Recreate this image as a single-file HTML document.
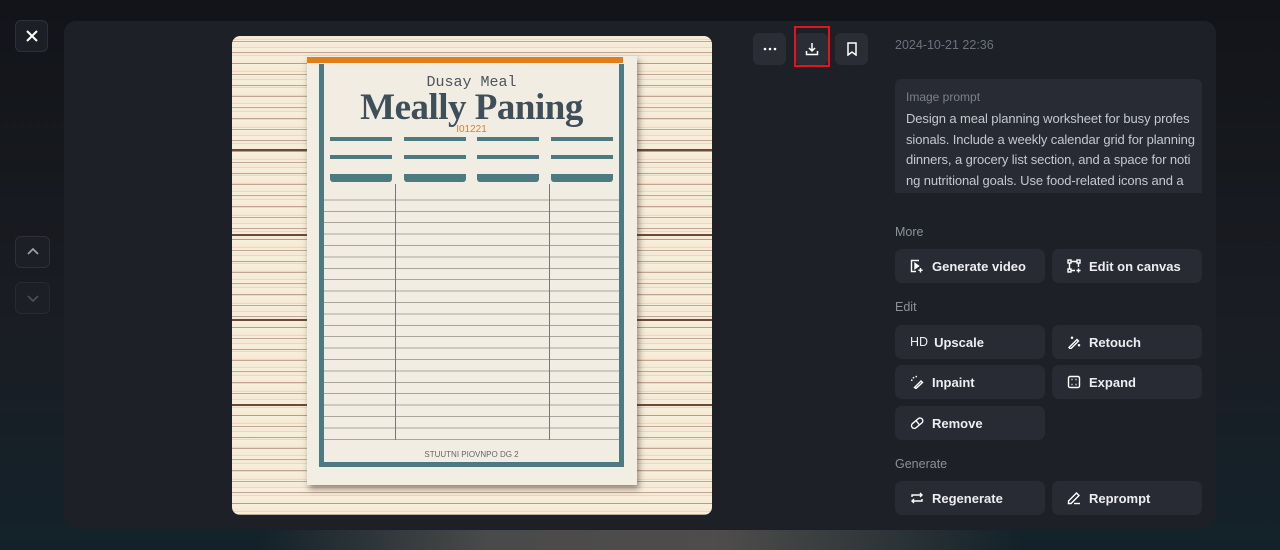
<!DOCTYPE html>
<html><head><meta charset="utf-8"><style>
*{box-sizing:border-box;margin:0;padding:0}
body{width:1280px;height:550px;overflow:hidden;background:linear-gradient(180deg,#121419 0%,#1a1d23 60%,#13222a 100%);font-family:"Liberation Sans",sans-serif;position:relative}
.abs{position:absolute}
.bottomglow{left:260px;top:530px;width:760px;height:20px;background:linear-gradient(90deg,rgba(80,80,80,0),#4a4a4a 30%,#4f4d4b 60%,rgba(60,60,60,0))}
.panel{left:64px;top:21px;width:1152px;height:508px;background:#1d2027;border-radius:12px}
.sq{border:1px solid #2c3038;background:#1c1f25;border-radius:6px;display:flex;align-items:center;justify-content:center}
.img{left:232px;top:36px;width:480px;height:479px;border-radius:8px;overflow:hidden;
background:
repeating-linear-gradient(180deg,rgba(0,0,0,0) 0 5px,rgba(130,80,60,.45) 5px 6px,rgba(0,0,0,0) 6px 11px),
repeating-linear-gradient(180deg,#f4ead6 0 3px,#ead9bd 3px 4px,#f6eddb 4px 8px);}
.plank{position:absolute;left:0;width:480px;height:2px;background:#6b4a38}
.paper{left:307px;top:56px;width:330px;height:429px;background:#f2eee3;box-shadow:2px 4px 6px rgba(60,40,30,.5)}
.orange{left:307px;top:57px;width:316px;height:6px;background:#e07e1c}
.frame{left:319px;top:64px;width:305px;height:403px;border:5px solid #4d7a80;border-top:none;background:#f1ede2}
.btn{position:absolute;width:150px;height:34px;background:#282b34;border-radius:7px;color:#eceef2;font-weight:bold;font-size:13px;display:flex;align-items:center;padding-left:15px}
.btn svg{margin-right:8px}
.lbl{position:absolute;left:895px;color:#8b909a;font-size:12.5px}
.pl{white-space:nowrap}
</style></head><body>
<div class="abs bottomglow"></div>
<div class="abs panel"></div>
<div class="abs sq" style="left:15px;top:20px;width:33px;height:32px"><svg width="14" height="14" viewBox="0 0 14 14"><path d="M2 2L12 12M12 2L2 12" stroke="#fff" stroke-width="2"/></svg></div>
<div class="abs sq" style="left:15px;top:236px;width:35px;height:32px"><svg width="14" height="10" viewBox="0 0 14 10"><path d="M2 7L7 2L12 7" stroke="#9a9ea6" stroke-width="1.8" fill="none"/></svg></div>
<div class="abs sq" style="left:15px;top:282px;width:35px;height:32px;border-color:#262a31"><svg width="14" height="10" viewBox="0 0 14 10"><path d="M2 3L7 8L12 3" stroke="#4a4e56" stroke-width="1.8" fill="none"/></svg></div>

<div class="abs img">
<div class="plank" style="top:113px"></div><div class="plank" style="top:198px"></div><div class="plank" style="top:283px"></div><div class="plank" style="top:368px"></div>
</div>
<div class="abs paper"></div>
<div class="abs orange"></div>
<div class="abs frame">
 <div class="abs" style="left:0;width:295px;top:10px;text-align:center;color:#4a5560;font-family:'Liberation Mono',monospace;font-size:15px">Dusay Meal</div>
 <div class="abs" style="left:0;width:295px;top:22px;text-align:center;color:#3f4f5a;font-family:'Liberation Serif',serif;font-weight:bold;font-size:37px;letter-spacing:-0.5px">Meally Paning</div>
 <div class="abs" style="left:0;width:295px;top:60px;text-align:center;color:#d9822a;font-size:10px">I01221</div>
 <div class="abs" style="left:6px;top:73px;width:62px;height:4px;background:#4d7a80"></div>
 <div class="abs" style="left:80px;top:73px;width:62px;height:4px;background:#4d7a80"></div>
 <div class="abs" style="left:153px;top:73px;width:62px;height:4px;background:#4d7a80"></div>
 <div class="abs" style="left:227px;top:73px;width:62px;height:4px;background:#4d7a80"></div>
 <div class="abs" style="left:6px;top:91px;width:62px;height:4px;background:#4d7a80"></div>
 <div class="abs" style="left:80px;top:91px;width:62px;height:4px;background:#4d7a80"></div>
 <div class="abs" style="left:153px;top:91px;width:62px;height:4px;background:#4d7a80"></div>
 <div class="abs" style="left:227px;top:91px;width:62px;height:4px;background:#4d7a80"></div>
 <div class="abs" style="left:6px;top:110px;width:62px;height:8px;background:#4d7a80;border-radius:0 0 3px 3px"></div>
 <div class="abs" style="left:80px;top:110px;width:62px;height:8px;background:#4d7a80;border-radius:0 0 3px 3px"></div>
 <div class="abs" style="left:153px;top:110px;width:62px;height:8px;background:#4d7a80;border-radius:0 0 3px 3px"></div>
 <div class="abs" style="left:227px;top:110px;width:62px;height:8px;background:#4d7a80;border-radius:0 0 3px 3px"></div>
 <div class="abs" style="left:0;top:125px;width:295px;height:251px;background:repeating-linear-gradient(180deg,transparent 0 10.4px,#a8a59c 10.4px 11.4px)"></div>
 <div class="abs" style="left:71px;top:120px;width:1px;height:256px;background:#777"></div>
 <div class="abs" style="left:225px;top:120px;width:1px;height:256px;background:#777"></div>
 <div class="abs" style="left:0;width:295px;top:386px;text-align:center;color:#666;font-size:8px">STUUTNI PIOVNPO DG 2</div>
</div>

<div class="abs sq" style="left:753px;top:33px;width:33px;height:32px;background:#2a2d35;border:none"><svg width="14" height="4"><circle cx="2" cy="2" r="1.3" fill="#fff"/><circle cx="7" cy="2" r="1.3" fill="#fff"/><circle cx="12" cy="2" r="1.3" fill="#fff"/></svg></div>
<div class="abs sq" style="left:795px;top:33px;width:33px;height:32px;background:#2a2d35;border:none"><svg width="14" height="14" viewBox="0 0 14 14" fill="none" stroke="#fff" stroke-width="1.5"><path d="M7 1V9M4 6L7 9L10 6M1.5 9V12.5H12.5V9"/></svg></div>
<div class="abs" style="left:794px;top:26px;width:36px;height:41px;border:2px solid #e5131b"></div>
<div class="abs sq" style="left:835px;top:33px;width:33px;height:32px;background:#2a2d35;border:none"><svg width="12" height="14" viewBox="0 0 12 14" fill="none" stroke="#fff" stroke-width="1.5"><path d="M2 1H10V13L6 10L2 13Z"/></svg></div>

<div class="abs" style="left:895px;top:38px;color:#6d727c;font-size:12.5px">2024-10-21 22:36</div>
<div class="abs" style="left:895px;top:79px;width:307px;height:114px;background:#282b34;border-radius:6px 6px 0 0;overflow:hidden;padding:11px 11px">
 <div style="color:#7b808a;font-size:12px;margin-bottom:5px">Image prompt</div>
 <div style="color:#c4c8cf;font-size:13px;line-height:20.5px;letter-spacing:-0.1px">
 <div class="pl">Design a meal planning worksheet for busy profes</div>
 <div class="pl">sionals. Include a weekly calendar grid for planning</div>
 <div class="pl">dinners, a grocery list section, and a space for noti</div>
 <div class="pl">ng nutritional goals. Use food-related icons and a</div>
 </div>
</div>

<div class="lbl" style="top:225px">More</div>
<div class="btn" style="left:895px;top:249px"><svg width="14" height="14" viewBox="0 0 14 14" fill="none" stroke="#fff" stroke-width="1.4"><path d="M9 1.5H1.5V12.5H6"/><path d="M5 4.5L8.5 7L5 9.5Z" fill="#fff"/><path d="M10.5 9V13.5M8.3 11.2H12.7"/></svg>Generate video</div>
<div class="btn" style="left:1052px;top:249px"><svg width="14" height="14" viewBox="0 0 14 14" fill="none" stroke="#fff" stroke-width="1.4"><rect x="1" y="1" width="3" height="3"/><rect x="10" y="1" width="3" height="3"/><rect x="1" y="10" width="3" height="3"/><path d="M4 2.5H10M2.5 4V10M11.5 4V8M4 11.5H8M11.5 9.5V13.5M9.5 11.5H13.5"/></svg>Edit on canvas</div>
<div class="lbl" style="top:300px">Edit</div>
<div class="btn" style="left:895px;top:325px"><span style="font-weight:normal;font-size:12.5px;margin-right:6px">HD</span>Upscale</div>
<div class="btn" style="left:1052px;top:325px"><svg width="14" height="14" viewBox="0 0 14 14" fill="none" stroke="#fff" stroke-width="1.4"><path d="M2 12.5L10 4.5L11.5 6L3.5 14Z"/><path d="M5 1.5V4M3.8 2.8H6.2M12 9V11.5M10.8 10.2H13.2"/></svg>Retouch</div>
<div class="btn" style="left:895px;top:365px"><svg width="14" height="14" viewBox="0 0 14 14" fill="none" stroke="#fff" stroke-width="1.4"><path d="M7 1.5A5.5 5.5 0 0 0 1.5 7" stroke-dasharray="1.5 1.5"/><path d="M4.5 12.5L11 6L12.5 7.5L6 13.5Z"/></svg>Inpaint</div>
<div class="btn" style="left:1052px;top:365px"><svg width="14" height="14" viewBox="0 0 14 14" fill="none" stroke="#fff" stroke-width="1.4"><rect x="1.5" y="1.5" width="11" height="11" rx="1.5"/><path d="M4.5 4.5H5.5M8.5 4.5H9.5M4.5 9.5H5.5M8.5 9.5H9.5"/></svg>Expand</div>
<div class="btn" style="left:895px;top:406px"><svg width="14" height="14" viewBox="0 0 14 14" fill="none" stroke="#fff" stroke-width="1.4"><rect x="0.5" y="4.5" width="13" height="5.5" rx="2.7" transform="rotate(-40 7 7)"/><path d="M6 4.5L9.5 9"/></svg>Remove</div>
<div class="lbl" style="top:457px">Generate</div>
<div class="btn" style="left:895px;top:481px"><svg width="14" height="14" viewBox="0 0 14 14" fill="none" stroke="#fff" stroke-width="1.4"><path d="M2 6V4H12M10 2L12 4L10 6M12 8V10H2M4 12L2 10L4 8"/></svg>Regenerate</div>
<div class="btn" style="left:1052px;top:481px"><svg width="14" height="14" viewBox="0 0 14 14" fill="none" stroke="#fff" stroke-width="1.4"><path d="M1.5 12.5V10L9.5 2L12 4.5L4 12.5Z"/><path d="M7 12.5H13"/></svg>Reprompt</div>
</body></html>
